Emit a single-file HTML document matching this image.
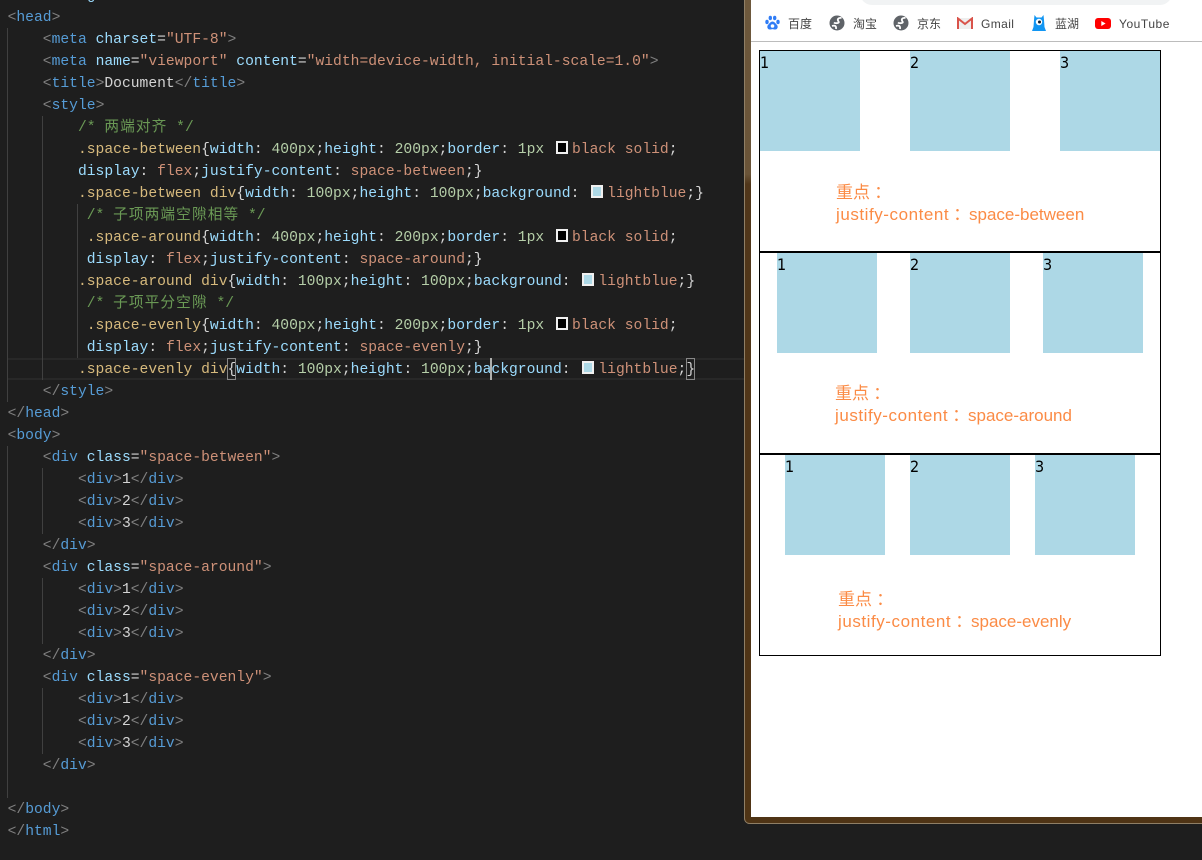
<!DOCTYPE html>
<html lang="zh">
<head>
<meta charset="UTF-8">
<title>Document</title>
<style>
html,body{margin:0;padding:0;}
body{width:1202px;height:860px;overflow:hidden;background:#1e1e1e;position:relative;}
.l{position:absolute;left:7.6px;height:22px;line-height:22px;white-space:pre;font-family:"Liberation Mono","Noto Sans CJK SC",monospace;font-size:14.67px;color:#d4d4d4;margin-top:1px;}
.p{color:#808080}.t{color:#569cd6}.a{color:#9cdcfe}.s{color:#ce9178}.c{color:#6a9955}.z{letter-spacing:1.1px}
.e{color:#d7ba7d}.n{color:#b5cea8}.w{color:#d4d4d4}
.sw{display:inline-block;width:8px;height:9px;border:2px solid #f0f0f0;margin:0 4px 0 3px;vertical-align:-1px;}
.g{position:absolute;width:1px;background:#404040;}
.frame{position:absolute;left:744px;top:-6px;width:470px;height:830px;border-radius:6px;background:linear-gradient(#6d583c 0,#6a5438 180px,#50361a 190px,#4f3415 100%);box-shadow:inset 1px 0 0 #8f7f66,inset 0 -1px 0 #8f7f66;}
.win{position:absolute;left:751px;top:0;width:451px;height:817px;background:#fff;overflow:hidden;}
.omni{position:absolute;left:860px;top:-20px;width:312px;height:25px;background:#f1f3f4;border-radius:12px;}
.tbline{position:absolute;left:751px;top:41px;width:451px;height:1px;background:#bcbcbc;}
.bm{position:absolute;top:15px;height:18px;line-height:18px;font-family:"Liberation Sans","Noto Sans CJK SC",sans-serif;font-size:12px;color:#444;white-space:pre;}
.ic{position:absolute;top:15px;}
.box{position:absolute;left:759px;width:400px;height:200px;border:1px solid #000;}
.it{position:absolute;width:100px;height:100px;background:#add8e6;color:#000;font-family:"DejaVu Sans",sans-serif;font-size:16px;line-height:23px;}
.it span{display:inline-block;transform:scaleX(.9);transform-origin:0 0;}
.nt{position:absolute;font-family:"Liberation Sans","Noto Sans CJK SC",sans-serif;font-size:17px;line-height:22px;color:#fb8b45;white-space:pre;}
.col{position:absolute;font-family:"Noto Sans CJK TC",sans-serif;font-size:17px;line-height:22px;color:#fb8b45;}
.j{letter-spacing:.55px;}
</style>
</head>
<body>
<div style="position:absolute;left:8px;top:358px;width:736px;height:18px;border-top:2px solid #282828;border-bottom:2px solid #282828;"></div>

<div class="g" style="left:7px;top:28px;height:374px"></div>
<div class="g" style="left:42px;top:116px;height:264px"></div>
<div class="g" style="left:77px;top:204px;height:154px"></div>
<div class="g" style="left:7px;top:446px;height:352px"></div>
<div class="g" style="left:42px;top:468px;height:66px"></div>
<div class="g" style="left:42px;top:578px;height:66px"></div>
<div class="g" style="left:42px;top:688px;height:66px"></div>

<div class="l" style="top:-16px"><span class="p">&lt;</span><span class="t">html</span> <span class="a">lang</span>=<span class="s">"en"</span><span class="p">&gt;</span></div>
<div class="l" style="top:6px"><span class="p">&lt;</span><span class="t">head</span><span class="p">&gt;</span></div>
<div class="l" style="top:28px">    <span class="p">&lt;</span><span class="t">meta</span> <span class="a">charset</span>=<span class="s">"UTF-8"</span><span class="p">&gt;</span></div>
<div class="l" style="top:50px">    <span class="p">&lt;</span><span class="t">meta</span> <span class="a">name</span>=<span class="s">"viewport"</span> <span class="a">content</span>=<span class="s">"width=device-width, initial-scale=1.0"</span><span class="p">&gt;</span></div>
<div class="l" style="top:72px">    <span class="p">&lt;</span><span class="t">title</span><span class="p">&gt;</span>Document<span class="p">&lt;/</span><span class="t">title</span><span class="p">&gt;</span></div>
<div class="l" style="top:94px">    <span class="p">&lt;</span><span class="t">style</span><span class="p">&gt;</span></div>
<div class="l" style="top:116px">        <span class="c">/* <span class="z">两端对齐</span> */</span></div>
<div class="l" style="top:138px">        <span class="e">.space-between</span>{<span class="a">width</span>: <span class="n">400px</span>;<span class="a">height</span>: <span class="n">200px</span>;<span class="a">border</span>: <span class="n">1px</span> <span class="sw" style="background:#000"></span><span class="s">black solid</span>;</div>
<div class="l" style="top:160px">        <span class="a">display</span>: <span class="s">flex</span>;<span class="a">justify-content</span>: <span class="s">space-between</span>;}</div>
<div class="l" style="top:182px">        <span class="e">.space-between div</span>{<span class="a">width</span>: <span class="n">100px</span>;<span class="a">height</span>: <span class="n">100px</span>;<span class="a">background</span>: <span class="sw" style="background:#add8e6"></span><span class="s">lightblue</span>;}</div>
<div class="l" style="top:204px">         <span class="c">/* <span class="z">子项两端空隙相等</span> */</span></div>
<div class="l" style="top:226px">         <span class="e">.space-around</span>{<span class="a">width</span>: <span class="n">400px</span>;<span class="a">height</span>: <span class="n">200px</span>;<span class="a">border</span>: <span class="n">1px</span> <span class="sw" style="background:#000"></span><span class="s">black solid</span>;</div>
<div class="l" style="top:248px">         <span class="a">display</span>: <span class="s">flex</span>;<span class="a">justify-content</span>: <span class="s">space-around</span>;}</div>
<div class="l" style="top:270px">        <span class="e">.space-around div</span>{<span class="a">width</span>: <span class="n">100px</span>;<span class="a">height</span>: <span class="n">100px</span>;<span class="a">background</span>: <span class="sw" style="background:#add8e6"></span><span class="s">lightblue</span>;}</div>
<div class="l" style="top:292px">         <span class="c">/* <span class="z">子项平分空隙</span> */</span></div>
<div class="l" style="top:314px">         <span class="e">.space-evenly</span>{<span class="a">width</span>: <span class="n">400px</span>;<span class="a">height</span>: <span class="n">200px</span>;<span class="a">border</span>: <span class="n">1px</span> <span class="sw" style="background:#000"></span><span class="s">black solid</span>;</div>
<div class="l" style="top:336px">         <span class="a">display</span>: <span class="s">flex</span>;<span class="a">justify-content</span>: <span class="s">space-evenly</span>;}</div>
<div class="l" style="top:358px">        <span class="e">.space-evenly div</span>{<span class="a">width</span>: <span class="n">100px</span>;<span class="a">height</span>: <span class="n">100px</span>;<span class="a">background</span>: <span class="sw" style="background:#add8e6"></span><span class="s">lightblue</span>;}</div>
<div class="l" style="top:380px">    <span class="p">&lt;/</span><span class="t">style</span><span class="p">&gt;</span></div>
<div class="l" style="top:402px"><span class="p">&lt;/</span><span class="t">head</span><span class="p">&gt;</span></div>
<div class="l" style="top:424px"><span class="p">&lt;</span><span class="t">body</span><span class="p">&gt;</span></div>
<div class="l" style="top:446px">    <span class="p">&lt;</span><span class="t">div</span> <span class="a">class</span>=<span class="s">"space-between"</span><span class="p">&gt;</span></div>
<div class="l" style="top:468px">        <span class="p">&lt;</span><span class="t">div</span><span class="p">&gt;</span>1<span class="p">&lt;/</span><span class="t">div</span><span class="p">&gt;</span></div>
<div class="l" style="top:490px">        <span class="p">&lt;</span><span class="t">div</span><span class="p">&gt;</span>2<span class="p">&lt;/</span><span class="t">div</span><span class="p">&gt;</span></div>
<div class="l" style="top:512px">        <span class="p">&lt;</span><span class="t">div</span><span class="p">&gt;</span>3<span class="p">&lt;/</span><span class="t">div</span><span class="p">&gt;</span></div>
<div class="l" style="top:534px">    <span class="p">&lt;/</span><span class="t">div</span><span class="p">&gt;</span></div>
<div class="l" style="top:556px">    <span class="p">&lt;</span><span class="t">div</span> <span class="a">class</span>=<span class="s">"space-around"</span><span class="p">&gt;</span></div>
<div class="l" style="top:578px">        <span class="p">&lt;</span><span class="t">div</span><span class="p">&gt;</span>1<span class="p">&lt;/</span><span class="t">div</span><span class="p">&gt;</span></div>
<div class="l" style="top:600px">        <span class="p">&lt;</span><span class="t">div</span><span class="p">&gt;</span>2<span class="p">&lt;/</span><span class="t">div</span><span class="p">&gt;</span></div>
<div class="l" style="top:622px">        <span class="p">&lt;</span><span class="t">div</span><span class="p">&gt;</span>3<span class="p">&lt;/</span><span class="t">div</span><span class="p">&gt;</span></div>
<div class="l" style="top:644px">    <span class="p">&lt;/</span><span class="t">div</span><span class="p">&gt;</span></div>
<div class="l" style="top:666px">    <span class="p">&lt;</span><span class="t">div</span> <span class="a">class</span>=<span class="s">"space-evenly"</span><span class="p">&gt;</span></div>
<div class="l" style="top:688px">        <span class="p">&lt;</span><span class="t">div</span><span class="p">&gt;</span>1<span class="p">&lt;/</span><span class="t">div</span><span class="p">&gt;</span></div>
<div class="l" style="top:710px">        <span class="p">&lt;</span><span class="t">div</span><span class="p">&gt;</span>2<span class="p">&lt;/</span><span class="t">div</span><span class="p">&gt;</span></div>
<div class="l" style="top:732px">        <span class="p">&lt;</span><span class="t">div</span><span class="p">&gt;</span>3<span class="p">&lt;/</span><span class="t">div</span><span class="p">&gt;</span></div>
<div class="l" style="top:754px">    <span class="p">&lt;/</span><span class="t">div</span><span class="p">&gt;</span></div>
<div class="l" style="top:798px"><span class="p">&lt;/</span><span class="t">body</span><span class="p">&gt;</span></div>
<div class="l" style="top:820px"><span class="p">&lt;/</span><span class="t">html</span><span class="p">&gt;</span></div>

<div style="position:absolute;left:227px;top:358px;width:7px;height:20px;border:1px solid #888;"></div>
<div style="position:absolute;left:686px;top:358px;width:7px;height:20px;border:1px solid #888;"></div>
<div style="position:absolute;left:490px;top:358px;width:2px;height:22px;background:#aeafad;"></div>

<div class="frame"></div>
<div class="win"></div>
<div class="omni"></div>
<div class="tbline"></div>

<svg class="ic" style="left:765px" width="15" height="17" viewBox="0 0 15 17"><g fill="#2f7cf6"><ellipse cx="2" cy="7" rx="1.7" ry="2.2"/><ellipse cx="5.3" cy="3" rx="1.7" ry="2.2"/><ellipse cx="9.7" cy="3" rx="1.7" ry="2.2"/><ellipse cx="13" cy="7" rx="1.7" ry="2.2"/><path d="M7.5 6.5c2 0 3 2 4.3 3.3 1.6 1.6 1 4.7-1.6 4.7-1 0-1.7-.4-2.7-.4s-1.7.4-2.7.4c-2.6 0-3.2-3.1-1.6-4.7C4.5 8.5 5.500 6.500 7.500 6.500z"/></g><circle cx="7.5" cy="11" r="1.8" fill="#fff"/></svg>
<div class="bm" style="left:788px">百度</div>
<svg class="ic" style="left:829px" width="16" height="16" viewBox="0 0 16 16"><circle cx="8" cy="8" r="7.5" fill="#5f6368"/><path d="M12.500 3C9 2.500 8 4.500 9.500 6.500 11 8.500 6 8.500 5 7.500M3 11c3-1 4.500 0 4 3" fill="none" stroke="#fff" stroke-width="1.800"/></svg>
<div class="bm" style="left:853px">淘宝</div>
<svg class="ic" style="left:893px" width="16" height="16" viewBox="0 0 16 16"><circle cx="8" cy="8" r="7.5" fill="#5f6368"/><path d="M12.500 3C9 2.500 8 4.500 9.500 6.500 11 8.500 6 8.500 5 7.500M3 11c3-1 4.500 0 4 3" fill="none" stroke="#fff" stroke-width="1.800"/></svg>
<div class="bm" style="left:917px">京东</div>
<svg class="ic" style="left:957px;top:17px" width="16" height="13" viewBox="0 0 16 13"><rect x="1" y="1" width="14" height="11" fill="#eee"/><path d="M1 12V1.500L8 7l7-5.500V12" fill="none" stroke="#d9534a" stroke-width="2"/></svg>
<div class="bm" style="left:981px;letter-spacing:.4px">Gmail</div>
<svg class="ic" style="left:1032px" width="14" height="17" viewBox="0 0 14 17"><path d="M2.500 0l2 2.500h5L11.500 0l.5 5 .5 7 1.500 4H0l1.500-4 .5-7z" fill="#1296f3"/><circle cx="7" cy="7" r="3.200" fill="#fff"/><circle cx="7.500" cy="7" r="1.500" fill="#123"/></svg>
<div class="bm" style="left:1055px">蓝湖</div>
<svg class="ic" style="left:1095px;top:18px" width="16" height="11" viewBox="0 0 16 11"><rect width="16" height="11" rx="3" fill="#f00"/><path d="M6.300 3v5l4.300-2.500z" fill="#fff"/></svg>
<div class="bm" style="left:1119px;letter-spacing:.55px">YouTube</div>

<div class="box" style="top:50px"></div>
<div class="it" style="left:760px;top:51px"><span>1</span></div>
<div class="it" style="left:910px;top:51px"><span>2</span></div>
<div class="it" style="left:1060px;top:51px"><span>3</span></div>
<div class="nt" style="left:836px;top:182px">重点</div>
<div class="col" style="left:870px;top:181px">：</div>
<div class="nt j" style="left:836px;top:204px">justify-content</div>
<div class="col" style="left:949px;top:203px">：</div>
<div class="nt" style="left:969px;top:204px">space-between</div>

<div class="box" style="top:252px"></div>
<div class="it" style="left:777px;top:253px"><span>1</span></div>
<div class="it" style="left:910px;top:253px"><span>2</span></div>
<div class="it" style="left:1043px;top:253px"><span>3</span></div>
<div class="nt" style="left:835px;top:383px">重点</div>
<div class="col" style="left:869px;top:382px">：</div>
<div class="nt j" style="left:835px;top:405px">justify-content</div>
<div class="col" style="left:948px;top:404px">：</div>
<div class="nt" style="left:968px;top:405px">space-around</div>

<div class="box" style="top:454px"></div>
<div class="it" style="left:785px;top:455px"><span>1</span></div>
<div class="it" style="left:910px;top:455px"><span>2</span></div>
<div class="it" style="left:1035px;top:455px"><span>3</span></div>
<div class="nt" style="left:838px;top:589px">重点</div>
<div class="col" style="left:872px;top:588px">：</div>
<div class="nt j" style="left:838px;top:611px">justify-content</div>
<div class="col" style="left:951px;top:610px">：</div>
<div class="nt" style="left:971px;top:611px">space-evenly</div>
</body>
</html>
